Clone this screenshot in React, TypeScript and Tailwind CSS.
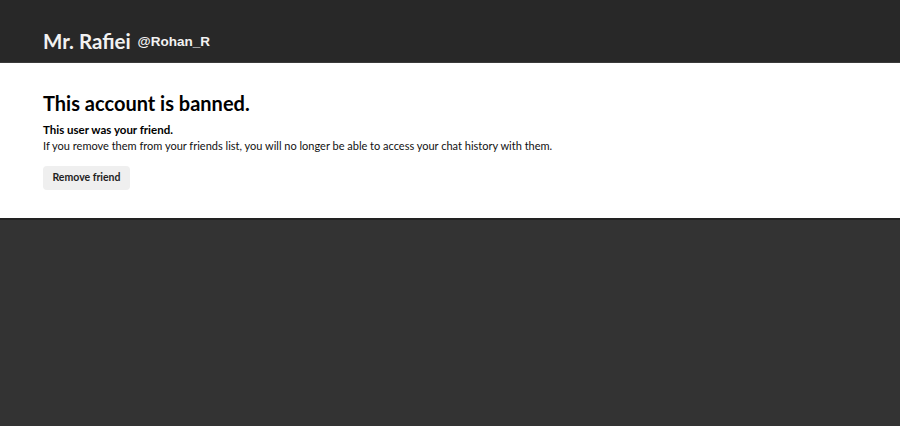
export default function App() {
  return (
    <div className="flex h-[426px] w-[900px] flex-col bg-[#333333]" style={{ fontFamily: "Lato, 'Noto Sans', sans-serif" }}>
      <header className="flex h-[63px] items-end gap-[7px] border-b border-[#3a3a3a] bg-[#282828] px-[43px] pb-[11px]">
        <span className="text-[20.5px] font-bold leading-none text-[#f2f2f2]">Mr. Rafiei</span>
        <span className="mb-[3px] text-[13.5px] font-bold leading-none text-[#f2f2f2]" style={{ fontFamily: "'Liberation Sans', Arial, sans-serif" }}>@Rohan_R</span>
      </header>
      <main className="flex h-[157px] flex-col border-b-[2px] border-[#222222] bg-white px-[43px] pt-[29px]">
        <h1 className="text-[20px] font-bold leading-[22px] text-black">This account is banned.</h1>
        <p className="mt-[8px] text-[11.5px] font-bold leading-[15px] text-black">This user was your friend.</p>
        <p className="mt-[1px] text-[11px] leading-[15px] text-[#111111]">If you remove them from your friends list, you will no longer be able to access your chat history with them.</p>
        <button className="mt-[13px] h-[24px] w-[87px] rounded-[4px] bg-[#efefef] text-[10.5px] font-bold text-[#222222]">Remove friend</button>
      </main>
    </div>
  );
}
